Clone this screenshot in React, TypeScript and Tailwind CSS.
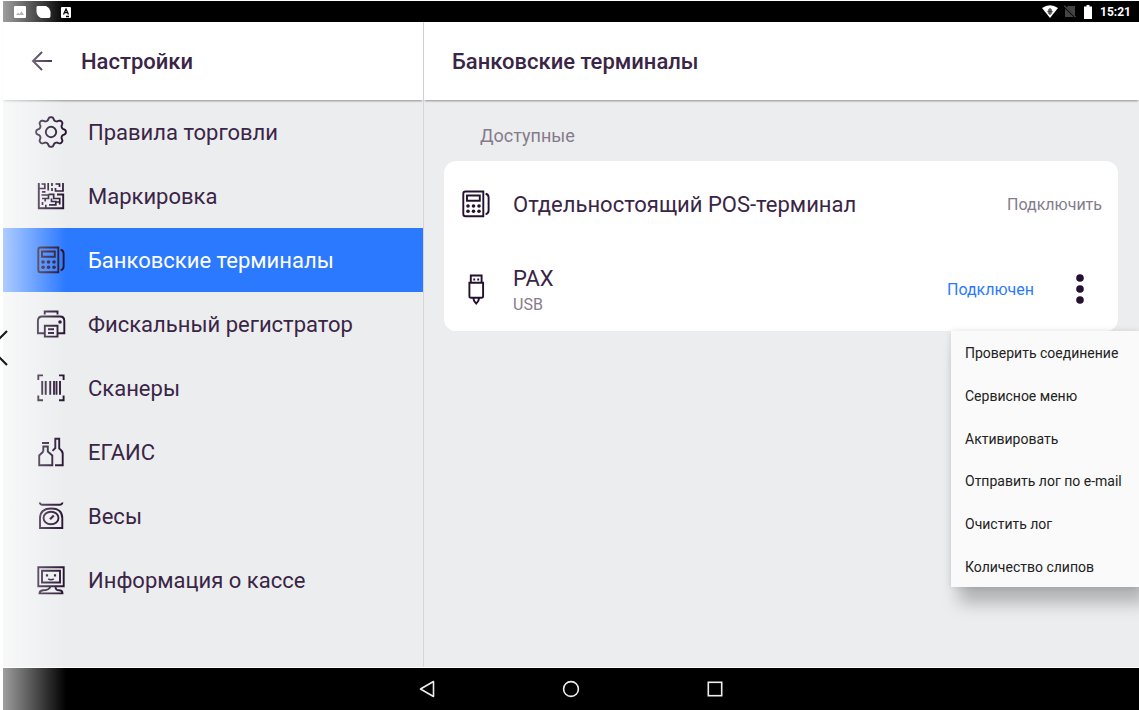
import type { ReactNode } from "react";

const Icon = ({ children }: { children: ReactNode }) => (
  <svg
    viewBox="0 0 32 32"
    className="w-8 h-8 shrink-0 text-[#24102f]"
    fill="none"
    stroke="currentColor"
    strokeWidth="1.9"
    aria-hidden="true"
  >
    {children}
  </svg>
);

const gearPath =
  Array.from({ length: 96 }, (_, i) => {
    const a = (i / 96) * Math.PI * 2;
    const wave = Math.cos(8 * a);
    const r = 13.3 + 1.6 * Math.sign(wave) * Math.sqrt(Math.abs(wave));
    return `${i ? "L" : "M"}${(16 + r * Math.cos(a)).toFixed(2)} ${(16 + r * Math.sin(a)).toFixed(2)}`;
  }).join("") + "Z";

const GearIcon = () => (
  <Icon>
    <path d={gearPath} strokeLinejoin="round" />
    <circle cx="16" cy="16" r="5.2" />
  </Icon>
);

const MatrixIcon = () => (
  <Icon>
    <path d="M3.8 3V28.2H28.2V14.5H22" />
    <path
      d="M3.5 8.5H9.8V4H6.5M13.2 3V10.5M17 3V6M17 8V11M20.5 4H24.5V7M28 3V11H20.5V8M7 11.8H10.5M6.5 15H13.5V18.5H7M13.5 14.3H18.7V18.5H24.7V24.5M10.2 18.5V21.5M7.5 22V25M10.8 24.8V28M14 24.8H20.8V21.5H16.5V18.5M24.7 22H21"
      strokeWidth="1.7"
    />
  </Icon>
);

const TerminalIcon = () => (
  <Icon>
    <path d="M5.5 3.5H23.3V28.3H5.5Q3.3 28.3 3.3 26V5.7Q3.3 3.5 5.5 3.5Z" />
    <path d="M7 7.5H19.8V12.8H7ZM25.6 5.8Q28.6 6.5 28.6 9.5V22.5Q28.6 25.5 25.6 26.3" />
    <g fill="currentColor" stroke="none">
      <circle cx="8" cy="18" r="1.8" />
      <circle cx="13.5" cy="18" r="1.8" />
      <circle cx="19" cy="18" r="1.8" />
      <circle cx="8" cy="23.3" r="1.8" />
      <circle cx="13.5" cy="23.3" r="1.8" />
      <circle cx="19" cy="23.3" r="1.8" />
    </g>
  </Icon>
);

const PrinterIcon = () => (
  <Icon>
    <path d="M9.7 6.5V3.5H22.5V6.5M9.5 25.3H2.9V13Q2.9 8.5 7.3 8.5H25Q29.3 8.5 29.3 13V25.3H23" />
    <path d="M9.8 17.8H22.5V28.6H9.8ZM13 21.3H19M13 25H19" />
    <circle cx="25" cy="14" r="1.8" fill="currentColor" stroke="none" />
  </Icon>
);

const BarcodeIcon = () => (
  <Icon>
    <path d="M3.3 8V3.4H8M24 3.4H28.6V8M28.6 23.5V28.2H24M8 28.2H3.3V23.5" />
    <path d="M7.2 9V22.7M10.7 9V22.7M15.2 9V22.7M19 9V22.7M21.5 9V22.7M25 9V22.7" />
  </Icon>
);

const BottlesIcon = () => (
  <Icon>
    <path d="M7 7H14M8.3 15.5V10.5H12.8V15.5L17.3 19.5V29.2H4.2V19.5L8.3 15.5" />
    <path d="M17.5 14.8L20.3 12V2.8H24.2V12.5Q27.7 15 27.7 17.5V29.2H20" />
  </Icon>
);

const ScaleIcon = () => (
  <Icon>
    <path d="M4.7 2.5Q5 4.8 7.5 4.8H24.7Q27.2 4.8 27.5 2.5M5 28V18.5Q5 8.5 16.2 8.5T27.3 18.5V28Z" />
    <ellipse cx="16" cy="18" rx="7.5" ry="6.3" />
    <path d="M15 19.3L18.8 15.5" strokeWidth="2.2" />
  </Icon>
);

const ComputerIcon = () => (
  <Icon>
    <path d="M3.3 3.2H28.7V22.3H3.3ZM7 6.8H25V18.5H7ZM15.5 22.5Q14 26.3 8 26.3Q4.5 26.8 4.5 29.4H27.5Q27.5 26.3 24 26.3Q20.5 26.3 20.5 22.5" />
    <path d="M13.2 14.8Q16 16.6 18.8 14.8" strokeWidth="1.6" />
    <path d="M12 10.3V12.5M20 10.3V12.5" strokeWidth="2.2" />
  </Icon>
);

const UsbIcon = () => (
  <Icon>
    <path d="M10.8 9.8V2.5H21.6V9.8M9.4 9.8H23.1V23Q23.1 24.8 21.4 24.8H11.1Q9.4 24.8 9.4 23ZM13.3 25L14.2 28L16.2 30.5L18.2 28L19.2 25" />
    <path d="M14.2 5.5V7.5M18.2 5.5V7.5" />
  </Icon>
);

const sections = [
  { label: "Правила торговли", icon: GearIcon },
  { label: "Маркировка", icon: MatrixIcon },
  { label: "Банковские терминалы", icon: TerminalIcon, active: true },
  { label: "Фискальный регистратор", icon: PrinterIcon },
  { label: "Сканеры", icon: BarcodeIcon },
  { label: "ЕГАИС", icon: BottlesIcon },
  { label: "Весы", icon: ScaleIcon },
  { label: "Информация о кассе", icon: ComputerIcon },
];

const menuItems = [
  "Проверить соединение",
  "Сервисное меню",
  "Активировать",
  "Отправить лог по e-mail",
  "Очистить лог",
  "Количество слипов",
];

const StatusBar = () => (
  <div className="h-[21px] shrink-0 bg-black text-white flex items-center justify-between pl-[11px] pr-2">
    <div className="flex items-center gap-[10px]">
      <svg width="12" height="12" viewBox="0 0 12 12" aria-hidden="true">
        <rect width="12" height="12" rx="1" fill="white" />
        <path d="M2 9L4 6.5L5.5 8L7.5 5.5L10 9Z" fill="#777" />
      </svg>
      <svg width="15" height="12" viewBox="0 0 15 12" aria-hidden="true">
        <path d="M1.5 0H10Q14 2 14.5 6V10.5Q14 12 12.5 12H5Q1 10 .5 6V1.5Q.5 0 1.5 0Z" fill="white" />
      </svg>
      <svg width="10" height="12" viewBox="0 0 10 12" aria-hidden="true">
        <rect y="1" width="10" height="11" rx="1" fill="white" />
        <path d="M2.5 8.5L5 3L7.5 8.5M3.3 6.7H6.7M5 10.5H8" fill="none" stroke="black" strokeWidth="1.3" />
      </svg>
    </div>
    <div className="flex items-center">
      <svg width="16" height="13" viewBox="0 0 16 13" className="mr-1.5" aria-hidden="true">
        <path d="M0 3Q8 -2.5 16 3L8 13Z" fill="white" />
        <ellipse cx="8" cy="6.5" rx="2.3" ry="3" fill="#777" />
        <path d="M8 3V10M5.5 6.5H10.5" stroke="#333" strokeWidth=".8" />
      </svg>
      <svg width="12" height="13" viewBox="0 0 12 13" className="mr-2" aria-hidden="true">
        <path d="M4 1H11V12H1V4Z" fill="#444" />
        <path d="M0 1L11.5 12.5" stroke="black" strokeWidth="2" />
        <path d="M0 .5L11.5 12" stroke="#777" />
      </svg>
      <svg width="8" height="14" viewBox="0 0 8 14" className="mr-2" aria-hidden="true">
        <path d="M2.5 0H5.5V1.5H8V14H0V1.5H2.5Z" fill="white" />
      </svg>
      <span className="text-[12px] leading-4 font-bold">15:21</span>
    </div>
  </div>
);

const Sidebar = () => (
  <aside className="relative z-10 w-[421px] shrink-0 border-r border-[#d3d5d7] flex flex-col">
    <header className="h-[78px] shrink-0 bg-white flex items-center pl-7 shadow-[0_2px_2px_-1px_rgba(0,0,0,0.4)]">
      <button type="button" aria-label="Назад" className="mr-[29px]">
        <svg width="21" height="20" viewBox="0 0 21 20" fill="none" stroke="#2c1838" strokeWidth="2" aria-hidden="true">
          <path d="M21 10H2M11 1L2 10L11 19" />
        </svg>
      </button>
      <h1 className="pt-0.5 text-[22px] leading-8 font-medium">Настройки</h1>
    </header>
    <nav>
      {sections.map(({ label, icon: SectionIcon, active }) => (
        <a
          key={label}
          href="#"
          aria-current={active ? "page" : undefined}
          className={`h-16 flex items-center gap-[21px] pl-8 ${active ? "bg-[#2b79ff]" : ""}`}
        >
          <SectionIcon />
          <span className={`pt-0.5 text-[22px] leading-8 ${active ? "text-white" : ""}`}>{label}</span>
        </a>
      ))}
    </nav>
  </aside>
);

const TerminalMenu = () => (
  <div
    role="menu"
    className="absolute top-full -right-[21px] w-[188px] h-64 flex flex-col bg-[#fafafa] text-[#222] shadow-[0_0_6px_rgba(0,0,0,0.12),8px_16px_16px_rgba(0,0,0,0.25)]"
  >
    {menuItems.map((item) => (
      <button key={item} type="button" role="menuitem" className="flex-1 pl-3.5 pt-0.5 text-left text-[14px] leading-5 whitespace-nowrap">
        {item}
      </button>
    ))}
  </div>
);

const Terminals = () => (
  <main className="flex-1 min-w-0 flex flex-col">
    <header className="h-[78px] shrink-0 bg-white flex items-center pl-7 shadow-[0_2px_2px_-1px_rgba(0,0,0,0.4)]">
      <h2 className="pt-0.5 text-[22px] leading-8 font-medium">Банковские терминалы</h2>
    </header>
    <section className="pl-5 pr-[21px] pt-6">
      <h3 className="pl-9 text-[18px] leading-6 text-[#857b8c]">Доступные</h3>
      <div className="relative mt-[13px] h-[170px] rounded-xl bg-white">
        <div className="h-[86px] flex items-center gap-[21px] px-4">
          <TerminalIcon />
          <span className="flex-1 pt-0.5 text-[22px] leading-8">Отдельностоящий POS-терминал</span>
          <button type="button" className="pt-0.5 text-[16px] leading-6 text-[#857b8c]">
            Подключить
          </button>
        </div>
        <div className="h-[84px] flex items-center pl-4 pr-5">
          <UsbIcon />
          <div className="flex-1 pl-[21px] pt-1">
            <div className="text-[22px] leading-7">PAX</div>
            <div className="text-[16px] leading-6 text-[#857b8c]">USB</div>
          </div>
          <span className="pt-0.5 text-[16px] leading-6 text-[#2b79ff]">Подключен</span>
          <button type="button" aria-label="Действия" aria-haspopup="menu" className="ml-7 w-9 flex justify-center">
            <svg width="8" height="32" viewBox="0 0 8 32" fill="#24102f" aria-hidden="true">
              <circle cx="4" cy="5" r="3.8" />
              <circle cx="4" cy="16" r="3.8" />
              <circle cx="4" cy="27" r="3.8" />
            </svg>
          </button>
        </div>
        <TerminalMenu />
      </div>
    </section>
  </main>
);

const NavigationBar = () => (
  <div className="h-[42px] shrink-0 bg-black flex justify-center">
    <button type="button" aria-label="Назад" className="w-36 flex items-center justify-center">
      <svg width="18" height="18" viewBox="0 0 18 18" fill="none" stroke="#eee" strokeWidth="1.6" aria-hidden="true">
        <path d="M15.5 1.5V16.5L2.5 9Z" strokeLinejoin="round" />
      </svg>
    </button>
    <button type="button" aria-label="Домой" className="w-36 flex items-center justify-center">
      <svg width="18" height="18" viewBox="0 0 18 18" fill="none" stroke="#eee" strokeWidth="1.6" aria-hidden="true">
        <circle cx="9" cy="9" r="7.4" />
      </svg>
    </button>
    <button type="button" aria-label="Недавние" className="w-36 flex items-center justify-center">
      <svg width="18" height="18" viewBox="0 0 18 18" fill="none" stroke="#eee" strokeWidth="1.6" aria-hidden="true">
        <rect x="2.3" y="2.3" width="13.4" height="13.4" />
      </svg>
    </button>
  </div>
);

const App = () => {
  return (
    <div className="relative min-h-screen flex flex-col overflow-hidden bg-white pl-[3px] pt-px font-['Roboto',sans-serif] text-[#3a2546]">
      <StatusBar />
      <div className="flex-1 flex bg-[#ecedef] border-b border-white">
        <Sidebar />
        <Terminals />
      </div>
      <NavigationBar />

      {/* fade along the left edge with the gallery arrow on top */}
      <div className="pointer-events-none absolute inset-y-0 left-0 z-20 w-[66px] bg-linear-to-r from-white/65 to-transparent" />
      <button type="button" aria-label="Предыдущий" className="absolute left-0 top-[330px] z-20">
        <svg width="8" height="36" viewBox="0 0 8 36" fill="none" stroke="#1a1a1a" strokeWidth="2.2" aria-hidden="true">
          <path d="M7 1L-10 18L7 35" />
        </svg>
      </button>
    </div>
  );
};

export default App;
